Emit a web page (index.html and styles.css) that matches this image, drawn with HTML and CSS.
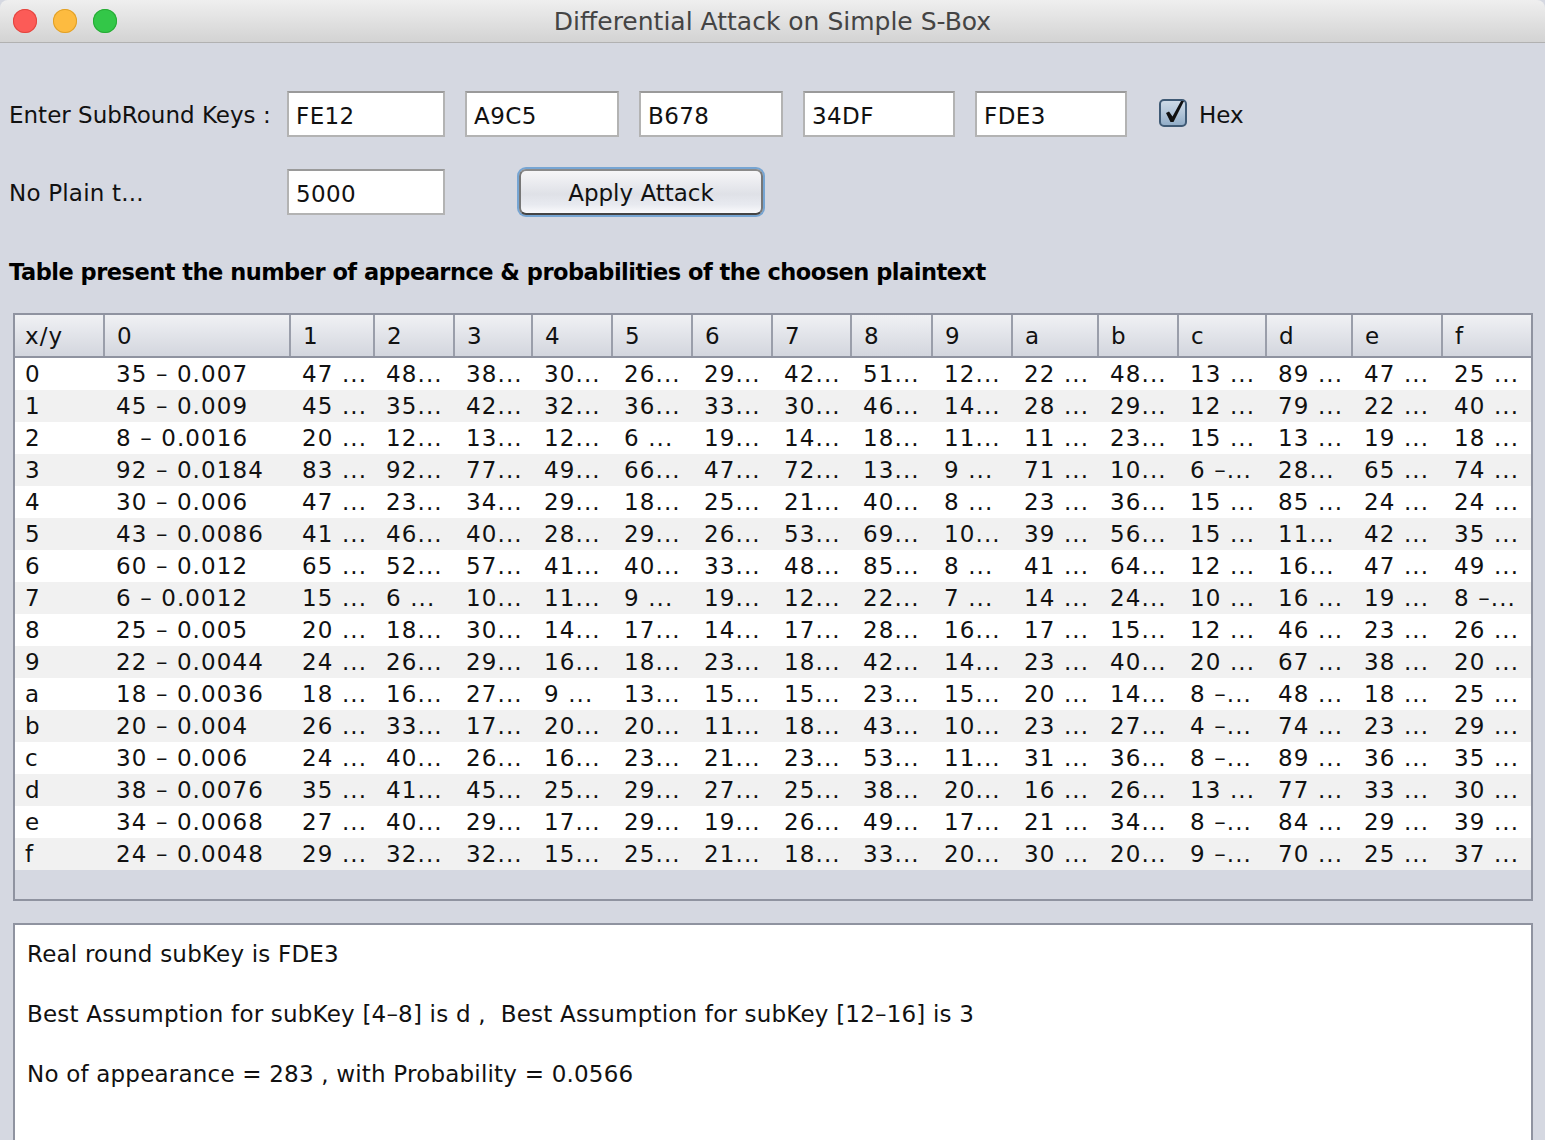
FILE: index.html
```html
<!DOCTYPE html>
<html lang="en">
<head>
  <meta charset="UTF-8">
  <title>Differential Attack on Simple S-Box</title>
  <link rel="stylesheet" href="styles.css">
</head>
<body>
  <div class="titlebar">
    <div class="lights">
      <span class="light red"></span>
      <span class="light yellow"></span>
      <span class="light green"></span>
    </div>
    <div class="title">Differential Attack on Simple S-Box</div>
  </div>

  <div class="content">
    <div class="form-row keys-row">
      <label class="field-label">Enter SubRound Keys :</label>
      <div class="field w158">FE12</div>
      <div class="field w154">A9C5</div>
      <div class="field w144">B678</div>
      <div class="field w152">34DF</div>
      <div class="field w152">FDE3</div>
      <div class="check">
        <svg width="30" height="30" viewBox="0 0 30 30">
          <defs>
            <linearGradient id="boxfill" x1="0" y1="0" x2="0" y2="1">
              <stop offset="0" stop-color="#d0dce8"/>
              <stop offset="0.5" stop-color="#b3c6d9"/>
              <stop offset="1" stop-color="#8fabc6"/>
            </linearGradient>
          </defs>
          <rect x="1" y="1" width="26" height="26" rx="4" fill="url(#boxfill)" stroke="#3f5a75" stroke-width="2"/>
          <path d="M7 14 L10 12.5 L13.5 17.5 L22 2 L25 2 L14.5 23 L11.5 23 Z" fill="#111"/>
        </svg>
        <span>Hex</span>
      </div>
    </div>

    <div class="form-row plain-row">
      <label class="field-label">No Plain t...</label>
      <div class="field w158">5000</div>
      <button class="apply">Apply Attack</button>
    </div>

    <h1 class="heading">Table present the number of appearnce &amp; probabilities of the choosen plaintext</h1>

    <div class="table-box">
      <table class="grid">
        <colgroup>
          <col class="c89"><col class="c186"><col class="c84"><col class="c80"><col class="c78"><col class="c80"><col class="c80"><col class="c80"><col class="c79"><col class="c81"><col class="c80"><col class="c86"><col class="c80"><col class="c88"><col class="c86"><col class="c90"><col class="c89">
        </colgroup>
        <thead>
          <tr><th>x/y</th><th>0</th><th>1</th><th>2</th><th>3</th><th>4</th><th>5</th><th>6</th><th>7</th><th>8</th><th>9</th><th>a</th><th>b</th><th>c</th><th>d</th><th>e</th><th>f</th></tr>
        </thead>
        <tbody>
          <tr><td>0</td><td>35 – 0.007</td><td>47 ...</td><td>48...</td><td>38...</td><td>30...</td><td>26...</td><td>29...</td><td>42...</td><td>51...</td><td>12...</td><td>22 ...</td><td>48...</td><td>13 ...</td><td>89 ...</td><td>47 ...</td><td>25 ...</td></tr>
          <tr><td>1</td><td>45 – 0.009</td><td>45 ...</td><td>35...</td><td>42...</td><td>32...</td><td>36...</td><td>33...</td><td>30...</td><td>46...</td><td>14...</td><td>28 ...</td><td>29...</td><td>12 ...</td><td>79 ...</td><td>22 ...</td><td>40 ...</td></tr>
          <tr><td>2</td><td>8 – 0.0016</td><td>20 ...</td><td>12...</td><td>13...</td><td>12...</td><td>6 ...</td><td>19...</td><td>14...</td><td>18...</td><td>11...</td><td>11 ...</td><td>23...</td><td>15 ...</td><td>13 ...</td><td>19 ...</td><td>18 ...</td></tr>
          <tr><td>3</td><td>92 – 0.0184</td><td>83 ...</td><td>92...</td><td>77...</td><td>49...</td><td>66...</td><td>47...</td><td>72...</td><td>13...</td><td>9 ...</td><td>71 ...</td><td>10...</td><td>6 –...</td><td>28...</td><td>65 ...</td><td>74 ...</td></tr>
          <tr><td>4</td><td>30 – 0.006</td><td>47 ...</td><td>23...</td><td>34...</td><td>29...</td><td>18...</td><td>25...</td><td>21...</td><td>40...</td><td>8 ...</td><td>23 ...</td><td>36...</td><td>15 ...</td><td>85 ...</td><td>24 ...</td><td>24 ...</td></tr>
          <tr><td>5</td><td>43 – 0.0086</td><td>41 ...</td><td>46...</td><td>40...</td><td>28...</td><td>29...</td><td>26...</td><td>53...</td><td>69...</td><td>10...</td><td>39 ...</td><td>56...</td><td>15 ...</td><td>11...</td><td>42 ...</td><td>35 ...</td></tr>
          <tr><td>6</td><td>60 – 0.012</td><td>65 ...</td><td>52...</td><td>57...</td><td>41...</td><td>40...</td><td>33...</td><td>48...</td><td>85...</td><td>8 ...</td><td>41 ...</td><td>64...</td><td>12 ...</td><td>16...</td><td>47 ...</td><td>49 ...</td></tr>
          <tr><td>7</td><td>6 – 0.0012</td><td>15 ...</td><td>6 ...</td><td>10...</td><td>11...</td><td>9 ...</td><td>19...</td><td>12...</td><td>22...</td><td>7 ...</td><td>14 ...</td><td>24...</td><td>10 ...</td><td>16 ...</td><td>19 ...</td><td>8 –...</td></tr>
          <tr><td>8</td><td>25 – 0.005</td><td>20 ...</td><td>18...</td><td>30...</td><td>14...</td><td>17...</td><td>14...</td><td>17...</td><td>28...</td><td>16...</td><td>17 ...</td><td>15...</td><td>12 ...</td><td>46 ...</td><td>23 ...</td><td>26 ...</td></tr>
          <tr><td>9</td><td>22 – 0.0044</td><td>24 ...</td><td>26...</td><td>29...</td><td>16...</td><td>18...</td><td>23...</td><td>18...</td><td>42...</td><td>14...</td><td>23 ...</td><td>40...</td><td>20 ...</td><td>67 ...</td><td>38 ...</td><td>20 ...</td></tr>
          <tr><td>a</td><td>18 – 0.0036</td><td>18 ...</td><td>16...</td><td>27...</td><td>9 ...</td><td>13...</td><td>15...</td><td>15...</td><td>23...</td><td>15...</td><td>20 ...</td><td>14...</td><td>8 –...</td><td>48 ...</td><td>18 ...</td><td>25 ...</td></tr>
          <tr><td>b</td><td>20 – 0.004</td><td>26 ...</td><td>33...</td><td>17...</td><td>20...</td><td>20...</td><td>11...</td><td>18...</td><td>43...</td><td>10...</td><td>23 ...</td><td>27...</td><td>4 –...</td><td>74 ...</td><td>23 ...</td><td>29 ...</td></tr>
          <tr><td>c</td><td>30 – 0.006</td><td>24 ...</td><td>40...</td><td>26...</td><td>16...</td><td>23...</td><td>21...</td><td>23...</td><td>53...</td><td>11...</td><td>31 ...</td><td>36...</td><td>8 –...</td><td>89 ...</td><td>36 ...</td><td>35 ...</td></tr>
          <tr><td>d</td><td>38 – 0.0076</td><td>35 ...</td><td>41...</td><td>45...</td><td>25...</td><td>29...</td><td>27...</td><td>25...</td><td>38...</td><td>20...</td><td>16 ...</td><td>26...</td><td>13 ...</td><td>77 ...</td><td>33 ...</td><td>30 ...</td></tr>
          <tr><td>e</td><td>34 – 0.0068</td><td>27 ...</td><td>40...</td><td>29...</td><td>17...</td><td>29...</td><td>19...</td><td>26...</td><td>49...</td><td>17...</td><td>21 ...</td><td>34...</td><td>8 –...</td><td>84 ...</td><td>29 ...</td><td>39 ...</td></tr>
          <tr><td>f</td><td>24 – 0.0048</td><td>29 ...</td><td>32...</td><td>32...</td><td>15...</td><td>25...</td><td>21...</td><td>18...</td><td>33...</td><td>20...</td><td>30 ...</td><td>20...</td><td>9 –...</td><td>70 ...</td><td>25 ...</td><td>37 ...</td></tr>
        </tbody>
      </table>
    </div>

    <div class="output">
      <p>Real round subKey is FDE3</p>
      <p>Best Assumption for subKey [4–8] is d ,&nbsp; Best Assumption for subKey [12–16] is 3</p>
      <p>No of appearance = 283 , with Probability = 0.0566</p>
    </div>
  </div>
</body>
</html>
```

FILE: styles.css
```css
html, body {
  margin: 0;
  height: 1140px;
  overflow: hidden;
}

body {
  background: #d5d8e1;
  font-family: "DejaVu Sans", sans-serif;
  font-size: 23px;
  color: #111;
}

.titlebar {
  box-sizing: border-box;
  height: 43px;
  padding-top: 1px;
  position: relative;
  display: flex;
  align-items: center;
  justify-content: center;
  background: linear-gradient(#efefef, #d3d3d3);
  border-bottom: 1px solid #b1b1b1;
  border-radius: 8px 8px 0 0;
}

.lights {
  position: absolute;
  left: 13px;
  top: 9px;
  display: flex;
  gap: 16px;
}

.light {
  width: 24px;
  height: 24px;
  border-radius: 50%;
}

.red { background: #fc5b57; box-shadow: inset 0 0 0 1px #e2463f; }
.yellow { background: #fdbb40; box-shadow: inset 0 0 0 1px #e0a028; }
.green { background: #33c748; box-shadow: inset 0 0 0 1px #27aa35; }

.title {
  font-size: 25px;
  color: #444;
}

.content {
  height: 1097px;
  overflow: hidden;
  padding: 48px 12px 0 13px;
}

.form-row {
  display: flex;
  align-items: center;
}

.keys-row {
  gap: 20px;
  height: 46px;
}

.plain-row {
  margin-top: 32px;
  height: 46px;
}

.field-label {
  width: 278px;
  margin-right: -20px;
  margin-left: -4px;
  padding-top: 2px;
  white-space: nowrap;
}

.plain-row .field-label {
  margin-right: 0;
  letter-spacing: 0.2px;
}

.field {
  box-sizing: border-box;
  height: 46px;
  padding: 2px 7px 0;
  line-height: 42px;
  letter-spacing: 0.4px;
  background: #fff;
  border: 2px solid #b3b3b3;
  border-top-color: #9a9a9a;
}

.w158 { width: 158px; }
.w154 { width: 154px; }
.w152 { width: 152px; }
.w144 { width: 144px; }

.check {
  display: flex;
  align-items: center;
  gap: 11px;
  margin-left: 12px;
  padding-top: 2px;
}

.check svg {
  display: block;
  margin-right: -1px;
  margin-top: -2px;
}

.apply {
  box-sizing: border-box;
  width: 244px;
  height: 46px;
  margin-left: 74px;
  padding-top: 2px;
  font: inherit;
  color: #111;
  background: linear-gradient(#f6f6f8 0%, #dfe1e7 55%, #e8eaf0 80%, #fafafc 100%);
  border: 2px solid #777;
  border-top-color: #8a8a8a;
  border-bottom-color: #444;
  border-radius: 7px;
  box-shadow: 0 0 0 2px #76a5d3;
}

.heading {
  margin: 43px 0 0 -4px;
  height: 28px;
  font-size: 22.5px;
  letter-spacing: -0.5px;
  line-height: 28px;
  font-weight: bold;
  color: #000;
  white-space: nowrap;
}

.table-box {
  box-sizing: border-box;
  height: 588px;
  margin-top: 27px;
  border: 2px solid #8f93a0;
}

.grid {
  table-layout: fixed;
  width: 1516px;
  border-collapse: collapse;
  letter-spacing: 1.1px;
}

.c78 { width: 78px; }
.c79 { width: 79px; }
.c80 { width: 80px; }
.c81 { width: 81px; }
.c84 { width: 84px; }
.c86 { width: 86px; }
.c88 { width: 88px; }
.c89 { width: 89px; }
.c90 { width: 90px; }
.c186 { width: 186px; }

.grid th,
.grid td {
  padding: 0 0 0 12px;
  overflow: hidden;
  white-space: nowrap;
  text-align: left;
  font-weight: normal;
}

.grid th:first-child,
.grid td:first-child {
  padding-left: 10px;
}

.grid th {
  height: 42px;
  box-sizing: border-box;
  background: linear-gradient(#f0f1f4, #d3d6de);
  border-right: 2px solid #9a9eaa;
  border-bottom: 2px solid #8f93a0;
}

.grid th:last-child {
  border-right: 0;
}

.grid td {
  height: 32px;
  line-height: 32px;
  background: #fff;
}

.grid tbody tr:nth-child(even) td {
  background: #f1f1f1;
}

.output {
  box-sizing: border-box;
  height: 300px;
  margin-top: 22px;
  padding: 11px 12px;
  letter-spacing: 0.2px;
  background: #fff;
  border: 2px solid #8f93a0;
}

.output p {
  margin: 0 0 24px;
  height: 36px;
  line-height: 36px;
  white-space: nowrap;
}
```
